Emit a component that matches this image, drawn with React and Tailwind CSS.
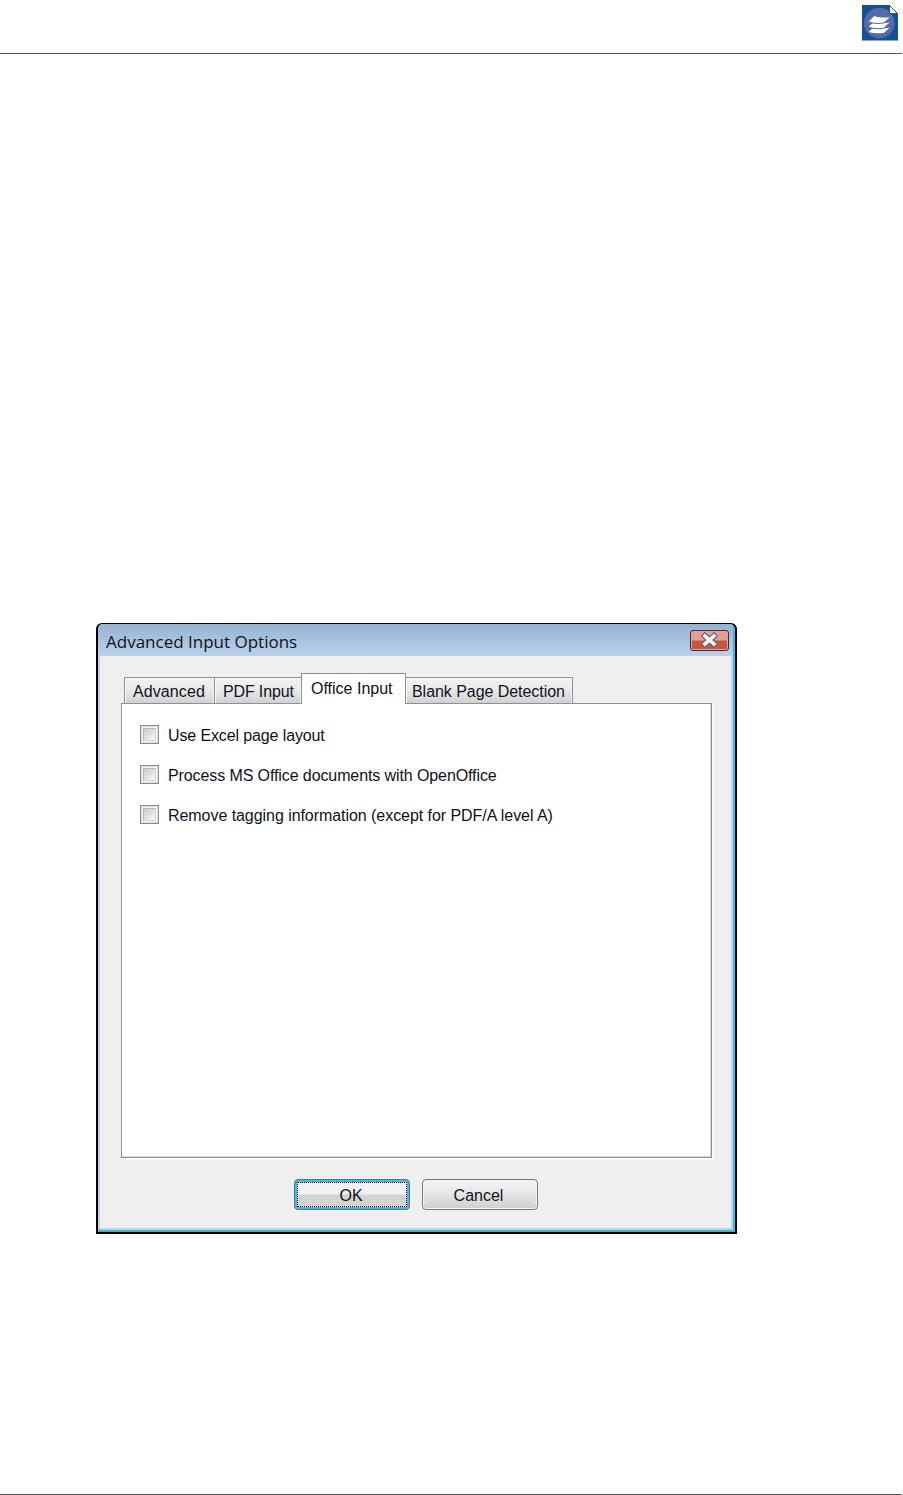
const tabs = [
  { label: 'Advanced', box: 'w-[91px]', text: 'tracking-[0.1px]', pad: 'pl-[8px]' },
  { label: 'PDF Input', box: 'w-[88px] -ml-px', text: 'tracking-[-0.15px]', pad: 'pl-[8px]' },
  { label: 'Office Input', active: true, box: 'w-[105px] -ml-px', text: 'tracking-[0px]', pad: 'pl-[9px]' },
  { label: 'Blank Page Detection', box: 'w-[168px] -ml-px', text: 'tracking-[-0.05px]', pad: 'pl-[6px]' },
]

const options = [
  { label: 'Use Excel page layout', text: 'tracking-[-0.12px]' },
  { label: 'Process MS Office documents with OpenOffice', text: 'tracking-[-0.1px]' },
  { label: 'Remove tagging information (except for PDF/A level A)', text: 'tracking-[-0.055px]' },
]

function Logo() {
  return (
    <svg width="38" height="38" viewBox="0 0 38 38" className="shrink-0">
      <path d="M1 1H28L37 10V36.5H1Z" fill="#164f91" />
      <circle cx="18.3" cy="19" r="15.3" fill="#526aaa" />
      <path d="M28.4 1.4L36.6 9.6H28.4Z" fill="#fff" stroke="#164f91" strokeWidth="1" />
      <g fill="#fff" stroke="#526aaa" strokeWidth="1.1" strokeLinejoin="round">
        <path d="M6.5 28.2L13.2 22Q20 24.8 30.6 22.6L23.4 29.2Q15 31 6.5 28.2Z" />
        <path d="M6.5 23L13.2 16.8Q20 19.6 30.6 17.4L23.4 24Q15 25.8 6.5 23Z" />
        <path d="M6.5 17.8L13.2 11.4Q20 14.2 30.6 12.2L23.4 18.8Q15 20.6 6.5 17.8Z" />
      </g>
    </svg>
  )
}

function CloseButton() {
  return (
    <button className="flex h-[21px] w-[39px] items-center justify-center rounded-[3px] border border-[#54222a] bg-linear-to-b from-[#dfa096] from-45% to-[#c75443] to-55% shadow-[inset_0_0_0_1px_#e2a79d]">
      <svg width="20" height="16" viewBox="0 0 20 16" className="-mt-[2px]">
        <path d="M5 4L14 12M14 4L5 12" stroke="#686069" strokeWidth="5.8" strokeLinecap="square" />
        <path d="M5 4L14 12M14 4L5 12" stroke="#f7f5f5" strokeWidth="3.6" strokeLinecap="square" />
      </svg>
    </button>
  )
}

function Tab({ tab }) {
  return (
    <div
      className={`flex shrink-0 items-center border border-b-0 border-[#8e9098] ${tab.box} ${tab.pad} ${
        tab.active
          ? 'z-10 h-[31px] bg-white pb-px'
          : 'h-[27px] bg-linear-to-b from-[#f2f2f2] via-[#e8e8e8] via-50% to-[#cfcfcf] pt-px shadow-[inset_1px_1px_0_#f8f8f8,inset_-1px_0_0_#f3f3f3]'
      }`}
    >
      <span className={`whitespace-nowrap ${tab.text}`}>{tab.label}</span>
    </div>
  )
}

function Option({ option }) {
  return (
    <label className="flex h-5 items-center gap-[9px]">
      <span className="-mt-px flex size-[19px] items-center justify-center border border-[#8b8d8f] bg-[#f4f4f4] shadow-[inset_0_0_0_1px_#dcdddd]">
        <span className="size-[13px] border border-[#b5b9be] border-r-[#d6d8da] border-b-[#d6d8da] bg-linear-to-br from-[#c9cdd3] to-[#f5f5f5]" />
      </span>
      <span className={`pt-px whitespace-nowrap ${option.text}`}>{option.label}</span>
    </label>
  )
}

function Dialog() {
  return (
    <section className="ml-24 h-[611px] w-[641px] rounded-t-[6px] bg-black px-[2px] pt-[1px] pb-[2px] font-['Liberation_Sans',sans-serif] text-[16px] leading-5 text-[#11111a]">
      <div className="flex h-full flex-col rounded-t-[5px] border-r-2 border-b-2 border-r-[#27c3e8] border-b-[#30b9cf] bg-[#bdd3ec] px-[2px] pb-[2px]">
        <header className="-mx-[2px] flex h-[32px] shrink-0 items-start justify-between rounded-t-[5px] bg-linear-to-b from-[#98b3d0] to-[#b9d2ec] pr-[4px] pl-[8px]">
          <h1 className="pt-[7px] font-['Open_Sans',sans-serif] text-[17px] leading-[22px] whitespace-nowrap">Advanced Input Options</h1>
          <div className="pt-[6px]">
            <CloseButton />
          </div>
        </header>
        <div className="flex flex-1 flex-col bg-[#efefef] pt-[17px] pl-[21px]">
          <nav className="flex h-[31px] shrink-0 items-end pl-[3px]">
            {tabs.map((tab) => (
              <Tab key={tab.label} tab={tab} />
            ))}
          </nav>
          <main className="-mt-px flex h-[455px] w-[591px] flex-col gap-5 border border-[#8e9098] bg-white pt-[21px] pl-[18px] shadow-[2px_2px_0_#fafafa,inset_-1px_-1px_0_#d8d9dc]">
            {options.map((option) => (
              <Option key={option.label} option={option} />
            ))}
          </main>
          <footer className="flex gap-3 pt-[21px] pl-[173px]">
            <button className="flex h-[31px] w-[116px] rounded-[4px] border border-[#427d9c] bg-[#42b9e3] p-[2px]">
              <span className="flex h-full w-full items-center justify-center border border-dotted border-black bg-linear-to-b from-[#f1f1f1] from-48% to-[#d3d3d3] to-52% pt-[2px] pr-[2px]">OK</span>
            </button>
            <button className="flex h-[31px] w-[116px] items-center justify-center rounded-[4px] border border-[#777] bg-linear-to-b from-[#f2f2f2] from-10% via-[#e5e5e5] via-50% to-[#cecece] pt-[2px] pr-[3px] shadow-[inset_0_0_0_1px_#f5f5f5]">
              Cancel
            </button>
          </footer>
        </div>
      </div>
    </section>
  )
}

export default function App() {
  return (
    <div className="flex h-[1495px] w-[903px] flex-col bg-white">
      <div className="flex h-[54px] w-[902px] shrink-0 items-start justify-end border-b border-[#555] pt-[4px] pr-[3px]">
        <Logo />
      </div>
      <div className="flex-1 pt-[569px]">
        <Dialog />
      </div>
      <div className="h-px w-[902px] shrink-0 bg-[#555]" />
    </div>
  )
}
